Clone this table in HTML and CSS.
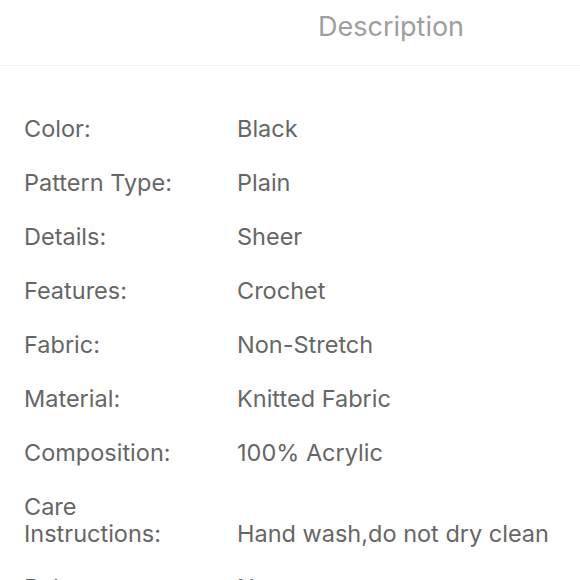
FILE: index.html
```html
<!DOCTYPE html>
<html>
<head>
<meta charset="utf-8">
<link rel="stylesheet" href="styles.css">
</head>
<body>
<div class="page">
  <header class="header"><h1 class="title">Description</h1></header>
  <dl class="specs">
    <div class="row"><dt>Color:</dt><dd>Black</dd></div>
    <div class="row"><dt>Pattern Type:</dt><dd>Plain</dd></div>
    <div class="row"><dt>Details:</dt><dd>Sheer</dd></div>
    <div class="row"><dt>Features:</dt><dd>Crochet</dd></div>
    <div class="row"><dt>Fabric:</dt><dd>Non-Stretch</dd></div>
    <div class="row"><dt>Material:</dt><dd>Knitted Fabric</dd></div>
    <div class="row"><dt>Composition:</dt><dd>100% Acrylic</dd></div>
    <div class="row"><dt>Care Instructions:</dt><dd>Hand wash,do not dry clean</dd></div>
    <div class="row"><dt>Belt:</dt><dd>No</dd></div>
  </dl>
</div>
</body>
</html>
```
FILE: styles.css
```css
html, body {
  margin: 0;
  padding: 0;
  background: #fff;
}
body {
  font-family: Inter, "Liberation Sans", Arial, sans-serif;
  overflow: hidden;
  height: 580px;
}
.page {
  width: 580px;
}
.header {
  height: 65px;
  border-bottom: 1px solid #f1f1f1;
  box-sizing: content-box;
}
.title {
  margin: 0;
  padding: 11px 0 0 318px;
  font-size: 27px;
  line-height: 32px;
  font-weight: normal;
  color: #9e9e9e;
}
.specs {
  margin: 0;
  padding: 35px 0 0 24px;
}
.row {
  display: flex;
  padding: 13.5px 0;
  font-size: 23.5px;
  line-height: 27px;
  color: #666;
}
.row dt {
  width: 213px;
  flex: none;
  padding-right: 20px;
  box-sizing: border-box;
}
.row dd {
  margin: 0;
  align-self: flex-end;
  white-space: nowrap;
}
```
